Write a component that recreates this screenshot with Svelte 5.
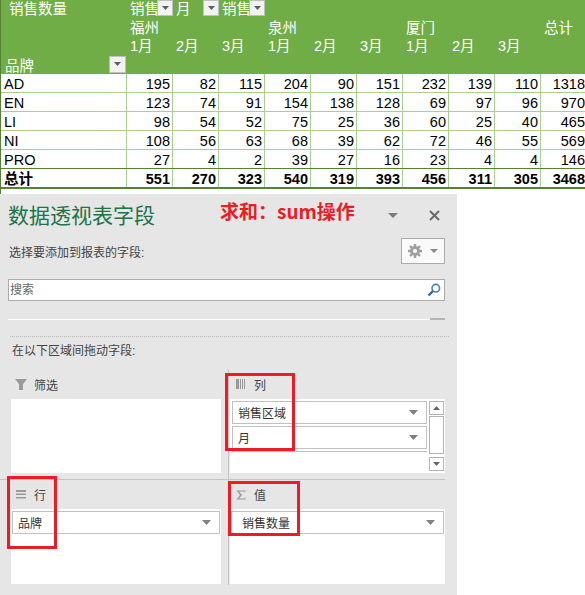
<script>
  // pivot table data: brand, then 9 month cells, then row total
  const rows = [
    ['AD', 195, 82, 115, 204, 90, 151, 232, 139, 110, 1318],
    ['EN', 123, 74, 91, 154, 138, 128, 69, 97, 96, 970],
    ['LI', 98, 54, 52, 75, 25, 36, 60, 25, 40, 465],
    ['NI', 108, 56, 63, 68, 39, 62, 72, 46, 55, 569],
    ['PRO', 27, 4, 2, 39, 27, 16, 23, 4, 4, 146]
  ];
  const total = ['总计', 551, 270, 323, 540, 319, 393, 456, 311, 305, 3468];
  const months = ['1月', '2月', '3月', '1月', '2月', '3月', '1月', '2月', '3月', ''];
  const cities = ['福州', '', '', '泉州', '', '', '厦门', '', '', '总计'];
</script>

{#snippet caret()}
  <svg class="caret" width="9" height="5" viewBox="0 0 9 5"><path d="M0 0H9L4.5 5Z" fill="#7f7f7f" /></svg>
{/snippet}

{#snippet filterBtn()}
  <span class="filter-btn"><svg width="7" height="4" viewBox="0 0 7 4"><path d="M0 0H7L3.5 4Z" fill="#5f5f5f" /></svg></span>
{/snippet}

<div class="page">
  <div class="pivot">
    <div class="head">
      <div class="head-row">
        <div class="first title-cell">销售数量</div>
        <div class="col">销售{@render filterBtn()}</div>
        <div class="col">月{@render filterBtn()}</div>
        <div class="col">销售{@render filterBtn()}</div>
      </div>
      <div class="head-row">
        <div class="first"></div>
        {#each cities as c}<div class="col">{c}</div>{/each}
      </div>
      <div class="head-row">
        <div class="first"></div>
        {#each months as m}<div class="col">{m}</div>{/each}
      </div>
      <div class="head-row">
        <div class="first brand">品牌{@render filterBtn()}</div>
      </div>
    </div>
    {#each rows as row}
      <div class="row">
        {#each row as v, i}
          <div class={i === 0 ? 'first' : 'num'}>{v}</div>
        {/each}
      </div>
    {/each}
    <div class="row total">
      {#each total as v, i}
        <div class={i === 0 ? 'first' : 'num'}>{v}</div>
      {/each}
    </div>
  </div>

  <div class="panel">
    <div class="panel-top">
      <h1>数据透视表字段</h1>
      <span class="note">求和：sum操作</span>
      <svg class="panel-menu" width="10" height="5" viewBox="0 0 10 5"><path d="M0 0H10L5 5Z" fill="#7a7a7a" /></svg>
      <svg class="close" width="11" height="11" viewBox="0 0 11 11"><path d="M1 1L10 10M10 1L1 10" stroke="#6a6a6a" stroke-width="2" /></svg>
    </div>

    <div class="choose">
      <span>选择要添加到报表的字段:</span>
      <span class="gear-btn">
        <svg width="14" height="14" viewBox="0 0 14 14">
          <circle cx="7" cy="7" r="3.6" fill="none" stroke="#a0a0a0" stroke-width="3" />
          <path d="M7 0V3M7 11V14M0 7H3M11 7H14M2 2L4 4M10 10L12 12M12 2L10 4M4 10L2 12" stroke="#a0a0a0" stroke-width="2.4" />
        </svg>
        <svg width="8" height="4" viewBox="0 0 8 4"><path d="M0 0H8L4 4Z" fill="#8a8a8a" /></svg>
      </span>
    </div>

    <div class="search">
      <span>搜索</span>
      <svg width="14" height="14" viewBox="0 0 14 14">
        <circle cx="8.8" cy="5.2" r="3.8" fill="none" stroke="#4a7fb5" stroke-width="1.6" />
        <path d="M6 8L1.5 12.5" stroke="#2f6aa8" stroke-width="2.4" />
      </svg>
    </div>

    <div class="splitter"><span></span></div>
    <div class="dotted"></div>
    <div class="drag-label">在以下区域间拖动字段:</div>

    <div class="areas">
      <section class="area">
        <div class="area-label">
          <svg width="12" height="11" viewBox="0 0 12 11"><path d="M0 0H12L8 5V11H4V5Z" fill="#9a9a9a" /></svg>
          <span>筛选</span>
        </div>
        <div class="well"></div>
      </section>

      <section class="area right">
        <div class="area-label">
          <svg width="10" height="10" viewBox="0 0 10 10"><path d="M0 0H3V10H0ZM4 0H5V10H4ZM6 0H7V10H6ZM8 0H9V10H8Z" fill="#9a9a9a" /></svg>
          <span>列</span>
        </div>
        <div class="well scrolled">
          <div class="fields">
            <div class="field">销售区域{@render caret()}</div>
            <div class="field">月{@render caret()}</div>
            <div class="field empty"></div>
          </div>
          <div class="scrollbar">
            <span class="sb-btn"><svg width="7" height="4" viewBox="0 0 7 4"><path d="M0 4H7L3.5 0Z" fill="#666" /></svg></span>
            <span class="sb-thumb"></span>
            <span class="sb-btn"><svg width="7" height="4" viewBox="0 0 7 4"><path d="M0 0H7L3.5 4Z" fill="#666" /></svg></span>
          </div>
        </div>
      </section>

      <section class="area lower">
        <div class="area-label">
          <svg width="10" height="9" viewBox="0 0 10 9"><path d="M0 0H10V2H0ZM0 3.500H10V5H0ZM0 7H10V8.500H0Z" fill="#9a9a9a" /></svg>
          <span>行</span>
        </div>
        <div class="well">
          <div class="field single">品牌{@render caret()}</div>
        </div>
      </section>

      <section class="area right lower">
        <div class="area-label">
          <svg width="10" height="10" viewBox="0 0 10 10"><path d="M0.500 0.500H9.500V2.500L8.500 1.500H3L6 5L3 8.500H8.500L9.500 7.500V9.500H0.500L4 5Z" fill="#9a9a9a" /></svg>
          <span>值</span>
        </div>
        <div class="well">
          <div class="field single indent">销售数量{@render caret()}</div>
        </div>
      </section>
    </div>

    <!-- annotation boxes drawn over the screenshot -->
    <span class="mark mark-col"></span>
    <span class="mark mark-row"></span>
    <span class="mark mark-val"></span>
  </div>
</div>

<style>
  :global(body) {
    margin: 0;
    background: #fff;
  }

  .page {
    position: relative;
    width: 585px;
    height: 595px;
    overflow: hidden;
    font-family: "Liberation Sans", "Noto Sans CJK SC", sans-serif;
  }

  /* ---- pivot table ---- */
  .pivot {
    height: 194px;
    border-left: 1px solid #548235;
    box-sizing: border-box;
  }

  .head {
    height: 74px;
    background: #70ad47;
    color: #fff;
    font-size: 14.500px;
  }

  .head-row {
    display: flex;
    height: 18.500px;
    line-height: 18px;
  }

  .head .first {
    width: 129px;
    flex: none;
    box-sizing: border-box;
  }

  .title-cell {
    padding-left: 8px;
  }

  .brand {
    display: flex;
    align-items: center;
    padding-left: 4px;
    padding-top: 3px;
    position: relative;
  }

  .head .col {
    width: 46px;
    flex: none;
    display: flex;
    white-space: nowrap;
    position: relative;
    overflow: visible;
  }

  .filter-btn {
    position: absolute;
    right: 3px;
    top: 0;
    width: 16px;
    height: 16px;
    background: #f2f2f2;
    border: 1px solid #bfbfbf;
    box-sizing: border-box;
    display: flex;
    align-items: center;
    justify-content: center;
  }

  .brand .filter-btn {
    right: 4px;
    top: 0;
    width: 17px;
    height: 17px;
  }

  .row {
    display: flex;
    height: 19px;
    line-height: 20px;
    box-sizing: border-box;
    border-bottom: 1px solid #a9d08e;
    font-size: 14.500px;
    color: #000;
  }

  .row .first {
    width: 126px;
    flex: none;
    box-sizing: border-box;
    padding-left: 3px;
    border-right: 1px solid #a9d08e;
  }

  .row .num {
    width: 46px;
    flex: none;
    box-sizing: border-box;
    padding-right: 2px;
    text-align: right;
    border-right: 1px solid #a9d08e;
  }

  .row .num:last-child {
    border-right: 0;
  }

  .total {
    font-weight: bold;
    height: 21px;
    border-top: 1px solid #548235;
    border-bottom: 2px solid #548235;
    margin-top: -1px;
  }

  /* ---- field list panel ---- */
  .panel {
    position: relative;
    width: 457px;
    height: 401px;
    background: #e6e6e6;
    box-sizing: border-box;
    padding: 0 12px 0 8px;
    color: #444;
    font-size: 12px;
  }

  .panel-top {
    display: flex;
    align-items: center;
    height: 41px;
    padding-top: 2px;
    box-sizing: border-box;
  }

  h1 {
    margin: 0;
    font-size: 21px;
    font-weight: normal;
    color: #217346;
    line-height: 28px;
  }

  .note {
    position: absolute;
    left: 220px;
    top: 5px;
    font-family: "Noto Sans CJK SC", sans-serif;
    font-size: 19px;
    font-weight: bold;
    color: #ed1c24;
    line-height: 24px;
    white-space: nowrap;
  }

  .panel-menu {
    margin-left: auto;
    margin-right: 31px;
  }

  .close {
    margin-right: 5px;
  }

  .choose {
    display: flex;
    align-items: center;
    justify-content: space-between;
    height: 26px;
    margin-top: 3px;
    padding-left: 1px;
  }

  .gear-btn {
    width: 44px;
    height: 26px;
    box-sizing: border-box;
    border: 1px solid #ababab;
    background: #fafafa;
    display: flex;
    align-items: center;
    justify-content: center;
    gap: 8px;
  }

  .search {
    display: flex;
    align-items: center;
    justify-content: space-between;
    width: 437px;
    height: 22px;
    margin-top: 15px;
    box-sizing: border-box;
    border: 1px solid #ababab;
    background: #fff;
    padding: 0 3px 0 1px;
    color: #666;
  }

  .search span {
    margin-top: -4px;
  }

  .splitter {
    display: flex;
    width: 437px;
    height: 1px;
    margin-top: 18px;
    background: #fff;
    justify-content: flex-end;
  }

  .splitter span {
    width: 15px;
    height: 2px;
    margin-top: -1px;
    background: #b4b4b4;
  }

  .dotted {
    width: 439px;
    margin: 16px 0 0 2px;
    border-top: 1px dotted #bbb;
  }

  .drag-label {
    margin: 6px 0 0 4px;
    line-height: 16px;
  }

  .areas {
    position: absolute;
    left: 0;
    top: 175px;
    display: grid;
    grid-template-columns: 228px 217px;
    grid-template-rows: 110px 106px;
    width: 445px;
  }

  .area {
    box-sizing: border-box;
    padding-left: 11px;
    padding-right: 7px;
    font-size: 12px;
  }

  .area.right {
    border-left: 1px solid #c4c4c4;
    padding: 0 0 0 1px;
  }

  .area.lower {
    border-top: 1px solid #c4c4c4;
    height: 106px;
    padding-top: 0;
  }

  .area-label {
    display: flex;
    align-items: center;
    height: 30px;
    gap: 7px;
    padding-left: 4px;
  }

  .area.right .area-label {
    padding-left: 6px;
    gap: 8px;
  }

  .area.lower .area-label {
    height: 29px;
    gap: 8px;
    padding-left: 5px;
  }

  .area.right.lower .area-label {
    padding-left: 6px;
  }

  .well {
    background: #fff;
    height: 74px;
    box-sizing: border-box;
  }

  .area.lower .well {
    height: 75px;
    padding: 2px 1px 0;
  }

  .area.right.lower .well {
    padding: 2px 1px 0;
  }

  .scrolled {
    display: flex;
    padding: 2px 1px 0 2px;
    gap: 2px;
  }

  .fields {
    flex: 1;
    display: flex;
    flex-direction: column;
    gap: 2px;
  }

  .field {
    height: 23px;
    box-sizing: border-box;
    border: 1px solid #c0c0c0;
    background: #fff;
    display: flex;
    align-items: center;
    justify-content: space-between;
    padding: 0 8px 0 5px;
    font-size: 12px;
    color: #333;
  }

  .field.indent {
    padding-left: 10px;
  }

  .field.single {
    width: 100%;
    box-sizing: border-box;
  }

  .field.empty {
    flex: 1;
    border-width: 1px 0 0;
  }

  .caret {
    flex: none;
  }

  .scrollbar {
    width: 15px;
    display: flex;
    flex-direction: column;
    gap: 1px;
  }

  .sb-btn {
    height: 14px;
    box-sizing: border-box;
    border: 1px solid #b4b4b4;
    display: flex;
    align-items: center;
    justify-content: center;
  }

  .sb-thumb {
    height: 38px;
    box-sizing: border-box;
    border: 1px solid #b4b4b4;
    margin-bottom: 2px;
  }

  .mark {
    position: absolute;
    box-sizing: border-box;
    border: 3px solid #ed1c24;
  }

  .mark-col {
    left: 225px;
    top: 179px;
    width: 70px;
    height: 78px;
  }

  .mark-row {
    left: 7px;
    top: 282px;
    width: 50px;
    height: 73px;
  }

  .mark-val {
    left: 228px;
    top: 287px;
    width: 72px;
    height: 55px;
  }
</style>
